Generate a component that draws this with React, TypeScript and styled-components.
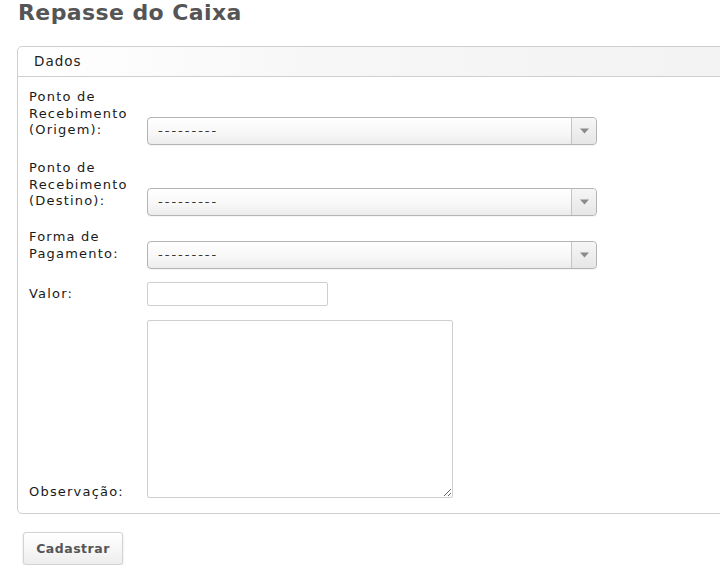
import React from "react";
import styled, { createGlobalStyle } from "styled-components";

const Global = createGlobalStyle`
  html, body { margin: 0; padding: 0; background: #fff; overflow: hidden; }
  body { font-family: "DejaVu Sans", Verdana, sans-serif; color: #333; }
`;

const Page = styled.div`
  width: 760px;
  padding: 0 0 0 17px;
`;

const Title = styled.h1`
  margin: 0;
  padding: 0 0 0 1px;
  height: 46px;
  font-size: 22px;
  line-height: 26px;
  font-weight: bold;
  color: #555;
  letter-spacing: 0.4px;
`;

const Panel = styled.div`
  width: 740px;
  border: 1px solid #cfcfcf;
  border-radius: 5px;
  background: #fff;
`;

const PanelHeader = styled.div`
  height: 29px;
  border-bottom: 1px solid #cfcfcf;
  border-radius: 5px 5px 0 0;
  background: linear-gradient(to right, #ffffff 0%, #f7f7f7 40%, #f2f2f2 100%);
  padding-left: 16px;
  font-size: 13.5px;
  line-height: 29px;
  letter-spacing: 1px;
  color: #222;
`;

const Body = styled.div`
  padding: 12px 11px 15px 11px;
  display: flex;
  flex-direction: column;
  gap: 13px;
`;

const Row = styled.div<{ $end?: boolean; $extra?: number }>`
  display: flex;
  align-items: ${(p) => (p.$end ? "flex-end" : "last baseline")};
  margin-top: ${(p) => p.$extra ?? 0}px;
`;

const Label = styled.label<{ $drop?: number }>`
  width: 118px;
  flex: none;
  font-size: 13px;
  line-height: 16.5px;
  letter-spacing: 1.2px;
  color: #1a1a1a;
  margin-bottom: ${(p) => -(p.$drop ?? 0)}px;
`;

const Select = styled.div`
  width: 448px;
  height: 26px;
  border: 1px solid #b4b4b4;
  border-radius: 4px;
  background: linear-gradient(to bottom, #ffffff 0%, #f7f7f7 60%, #ececec 100%);
  display: flex;
  align-items: center;
  box-shadow: 0 1px 0 rgba(0, 0, 0, 0.04);
`;

const SelectText = styled.span`
  flex: 1;
  padding-left: 10px;
  font-size: 13px;
  letter-spacing: 2px;
  color: #333;
  line-height: 26px;
`;

const Arrow = styled.span`
  width: 24px;
  height: 26px;
  border-left: 1px solid #c4c4c4;
  border-radius: 0 4px 4px 0;
  background: linear-gradient(to bottom, #f6f6f6 0%, #e6e6e6 100%);
  display: flex;
  align-items: center;
  justify-content: center;
`;

const Input = styled.input`
  box-sizing: border-box;
  width: 181px;
  height: 24px;
  border: 1px solid #cfcfcf;
  border-radius: 2px;
  margin: 0;
  padding: 0 4px;
  font-family: inherit;
  font-size: 13px;
  background: #fff;
  outline: none;
`;

const TextArea = styled.textarea`
  box-sizing: border-box;
  width: 306px;
  height: 178px;
  border: 1px solid #cfcfcf;
  border-radius: 2px;
  margin: 0;
  padding: 4px;
  font-family: inherit;
  font-size: 13px;
  background: #fff;
  outline: none;
  display: block;
`;

const Actions = styled.div`
  padding: 18px 0 0 6px;
`;

const Button = styled.button`
  width: 100px;
  height: 33px;
  border: 1px solid #d2d2d2;
  border-radius: 3px;
  background: linear-gradient(to bottom, #ffffff 0%, #f6f6f6 55%, #ededed 100%);
  box-shadow: 0 1px 2px rgba(0, 0, 0, 0.15);
  font-family: "DejaVu Sans", Verdana, sans-serif;
  font-weight: bold;
  font-size: 12.5px;
  color: #555;
  letter-spacing: 0.5px;
  cursor: pointer;
  padding: 0;
`;

const ArrowIcon = () => (
  <svg width="9" height="6" viewBox="0 0 9 6">
    <path d="M0 0.5 H9 L4.5 5.5 Z" fill="#8a8a8a" />
  </svg>
);

const FakeSelect = () => (
  <Select>
    <SelectText>---------</SelectText>
    <Arrow>
      <ArrowIcon />
    </Arrow>
  </Select>
);

export default function App() {
  return (
    <Page>
      <Global />
      <Title>Repasse do Caixa</Title>
      <Panel>
        <PanelHeader>Dados</PanelHeader>
        <Body>
          <Row>
            <Label>Ponto de Recebimento (Origem):</Label>
            <FakeSelect />
          </Row>
          <Row $extra={2}>
            <Label>Ponto de Recebimento (Destino):</Label>
            <FakeSelect />
          </Row>
          <Row>
            <Label>Forma de Pagamento:</Label>
            <FakeSelect />
          </Row>
          <Row>
            <Label>Valor:</Label>
            <Input type="text" />
          </Row>
          <Row $end $extra={1}>
            <Label $drop={3}>Observação:</Label>
            <TextArea />
          </Row>
        </Body>
      </Panel>
      <Actions>
        <Button>Cadastrar</Button>
      </Actions>
    </Page>
  );
}
